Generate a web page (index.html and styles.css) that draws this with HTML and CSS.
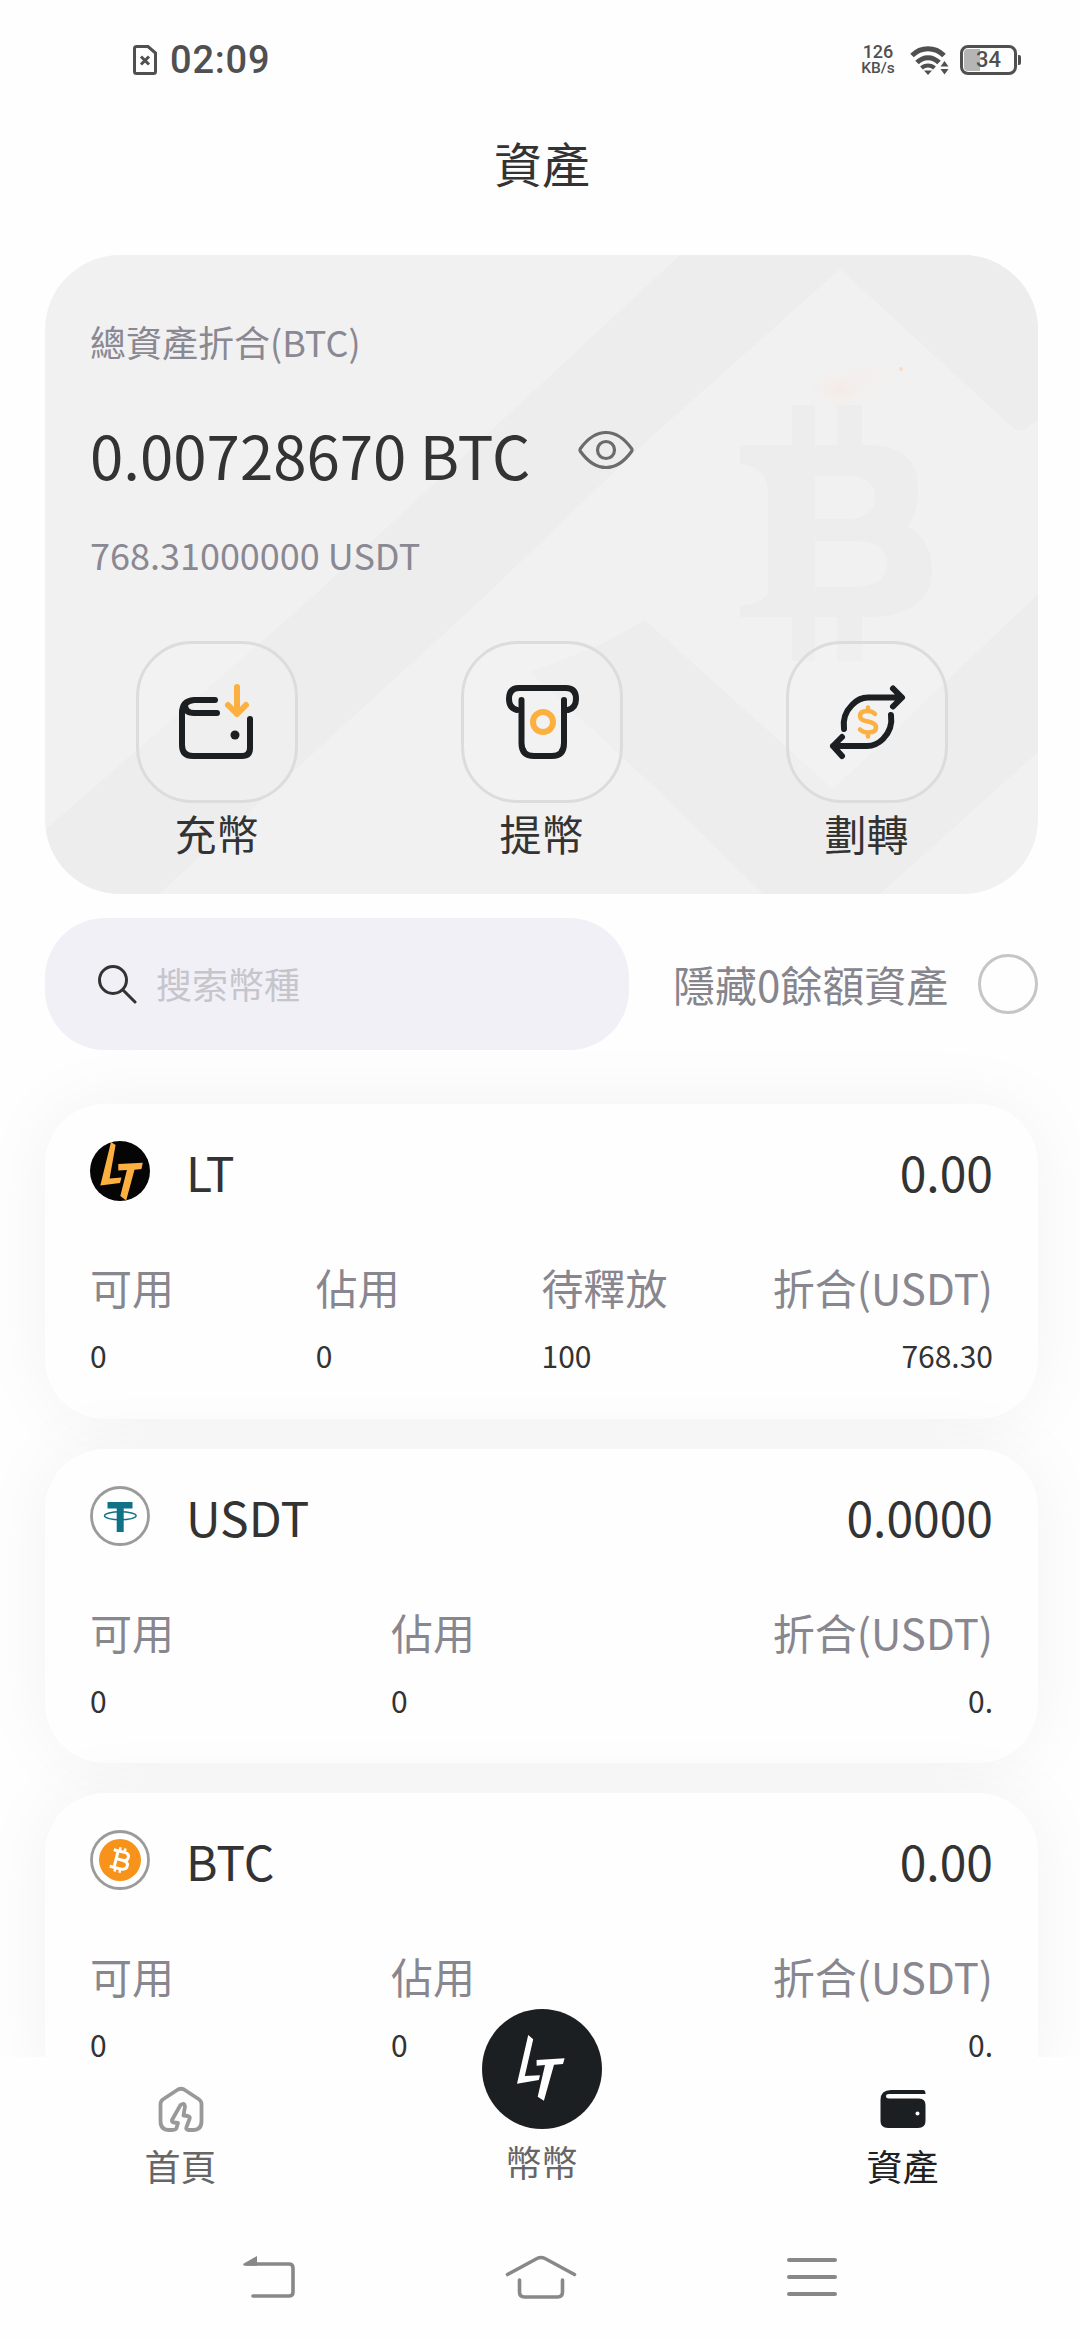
FILE: index.html
```html
<!DOCTYPE html>
<html lang="zh-Hant">
<head>
<meta charset="utf-8">
<title>資產</title>
<link rel="stylesheet" href="styles.css">
</head>
<body>
<div class="screen">
  <header class="status">
    <div class="status-left">
      <svg width="26" height="32" viewBox="0 0 26 32" fill="none" stroke="#505050"><path d="M4 2.5H16L23.5 9V27.5Q23.5 29.5 21.5 29.5H4.500Q2.500 29.500 2.500 27.500V4.500Q2.500 2.500 4.500 2.500Z" stroke-width="3"/><path d="M9 12.500L17 20.500M17 12.500L9 20.500" stroke-width="3"/></svg>
      <span class="clock">02:09</span>
    </div>
    <div class="status-right">
      <div class="speed"><span class="speed-num">126</span><span class="speed-unit">KB/s</span></div>
      <svg width="40" height="30" viewBox="0 0 40 30" fill="none" stroke="#505050" stroke-width="5"><path d="M2 10.500C11 1.500 25 1.500 34 10.500"/><path d="M7 17.500C13.500 11 22.500 11 29 17.500"/><path d="M11.500 23C15 19.500 21 19.500 24.500 23" stroke-width="4"/><path d="M14 25.500H22L18 30Z" fill="#505050" stroke="none"/><path d="M34.500 16L38.500 21.500H30.500ZM30.500 24H38.500L34.500 29.500Z" fill="#505050" stroke="none"/></svg>
      <div class="battery"><span class="battery-fill"></span><span class="battery-text">34</span></div>
    </div>
  </header>

  <h1 class="title">資產</h1>

  <section class="hero">
    <svg class="hero-art" width="993" height="639" viewBox="45 255 993 639">
      <defs><radialGradient id="glow"><stop offset="0" stop-color="#fbe3d8" stop-opacity=".5"/><stop offset="1" stop-color="#f6ece6" stop-opacity="0"/></radialGradient></defs>
      <g fill="#ededed">
        <path d="M680 255H1038V420L1024 430Q1018 432 1012 427L840 269L640 447L481 600L159 894H45V830L309 600Z"/>
        <path d="M645 620L833 789L1038 594V752L880 894H763L660 792L530 672L600 645Z"/>
        <path fill-rule="evenodd" d="M740 445H792V405H815V445H837V405H862V445H875Q918 449 918 488Q918 515 907 526Q932 540 932 570Q932 613 875 617H862V661H837V617H815V661H792V617H740V606Q768 602 768 590V490Q766 466 740 464ZM815 476V519H850Q875 517 875 498Q875 477 850 476ZM815 541V587H855Q887 586 887 564Q887 541 855 541Z"/>
      </g>
      <ellipse cx="840" cy="390" rx="34" ry="20" fill="url(#glow)"/>
      <ellipse cx="865" cy="376" rx="46" ry="20" fill="url(#glow)" opacity=".4"/>
      <circle cx="901" cy="369" r="2" fill="#f7ddc9"/>
    </svg>
    <div class="hero-body">
      <p class="hero-label">總資產折合(BTC)</p>
      <div class="balance-row">
        <span class="balance">0.00728670 BTC</span>
        <svg width="56" height="40" viewBox="0 0 56 40" fill="none" stroke="#6b6b6b" stroke-width="3.200"><path d="M2.500 18.500Q14 2.500 28 2.500T53.500 18.500Q54.500 20 53.500 21.500Q42 37.500 28 37.500T2.500 21.500Q1.500 20 2.500 18.500Z"/><circle cx="28" cy="20" r="8.500"/></svg>
      </div>
      <p class="hero-sub">768.31000000 USDT</p>
      <div class="actions">
        <div class="action">
          <div class="action-box"><svg width="80" height="80" viewBox="0 0 80 80" fill="none" stroke="#1c1f22" stroke-width="6" stroke-linecap="round" stroke-linejoin="round"><path d="M38 18H17Q5 19 5 31V63Q5 74 16 74H65Q73 74 73 66V37"/><path d="M40 31H17Q8 31 8 23"/><circle cx="58" cy="53" r="4.500" fill="#1c1f22" stroke="none"/><path d="M60 5V32M51 23L60 32L69 23" stroke="#fbb040"/></svg></div>
          <span>充幣</span>
        </div>
        <div class="action">
          <div class="action-box"><svg width="80" height="80" viewBox="0 0 80 80" fill="none" stroke="#1c1f22" stroke-width="6" stroke-linecap="round" stroke-linejoin="round"><path d="M15 28Q7 26 7 17Q7 6 17 6H64Q74 6 74 17Q74 26 66 28"/><path d="M19.500 18V61Q19.500 74 32 74H50Q62 74 62 61V18"/><circle cx="41" cy="40" r="10" stroke="#fbb040"/></svg></div>
          <span>提幣</span>
        </div>
        <div class="action">
          <div class="action-box"><svg width="80" height="80" viewBox="0 0 80 80" fill="none" stroke="#1c1f22" stroke-width="6" stroke-linecap="round" stroke-linejoin="round"><path d="M17 47Q15 33 25 23Q32 15.500 41 15.500H74M66 6.500L75 15.500L66 24.500"/><path d="M64 33Q66 47 56 57Q49 64 40 64H6M15 55L6 64L15 74"/><g stroke="#fbb040" stroke-width="4.500"><path d="M48 32Q45 29 40.500 29Q33 29 33 34Q33 38.500 41 39.500Q49 41 49 45.500Q49 50.500 41 50.500Q36 50.500 33 47.500M41 25.500V29M41 50.500V54.500"/></g></svg></div>
          <span>劃轉</span>
        </div>
      </div>
    </div>
  </section>

  <div class="filter">
    <div class="search">
      <svg width="40" height="40" viewBox="0 0 40 40" fill="none" stroke="#333" stroke-width="3"><circle cx="16" cy="16" r="13.500"/><path d="M26 26L38 38" stroke-linecap="round"/></svg>
      <span>搜索幣種</span>
    </div>
    <span class="hide-zero">隱藏0餘額資產</span>
    <span class="radio"></span>
  </div>

  <main class="assets">
    <article class="card">
      <div class="card-head">
        <svg width="60" height="60" viewBox="0 0 60 60"><circle cx="30" cy="30" r="30" fill="#050505"/><path fill="#fbb040" d="M21 1L25.600 4L19.600 37.500L31.500 36.500L30 42L10.300 44.500ZM28.300 23L52.800 21.700L51.500 28L44.500 28.700L36.200 59.500L30.300 55L36.900 29L28.300 29.500Z"/></svg>
        <span class="coin">LT</span><span class="total">0.00</span>
      </div>
      <div class="cols four">
        <div><p class="key">可用</p><p class="val">0</p></div>
        <div><p class="key">佔用</p><p class="val">0</p></div>
        <div><p class="key">待釋放</p><p class="val">100</p></div>
        <div class="end"><p class="key">折合(USDT)</p><p class="val">768.30</p></div>
      </div>
    </article>
    <article class="card">
      <div class="card-head">
        <svg width="60" height="60" viewBox="0 0 60 60"><circle cx="30" cy="30" r="28.500" fill="#fff" stroke="#9b9b9b" stroke-width="2.800"/><path fill="#0f7286" d="M17.500 16H42.500V22.500H33.700V46H26.700V22.500H17.500Z"/><ellipse cx="30.300" cy="29.800" rx="15.800" ry="4" fill="none" stroke="#0f7286" stroke-width="1.500"/></svg>
        <span class="coin">USDT</span><span class="total">0.0000</span>
      </div>
      <div class="cols">
        <div><p class="key">可用</p><p class="val">0</p></div>
        <div><p class="key">佔用</p><p class="val">0</p></div>
        <div class="end"><p class="key">折合(USDT)</p><p class="val">0.</p></div>
      </div>
    </article>
    <article class="card">
      <div class="card-head">
        <svg width="60" height="60" viewBox="0 0 60 60"><circle cx="30" cy="30" r="28.500" fill="#fff" stroke="#9b9b9b" stroke-width="2.800"/><circle cx="30" cy="30" r="21" fill="#f7931a"/><g transform="rotate(14 30 30)" fill="none" stroke="#fff" stroke-width="3"><path d="M21.500 21.500H32.500Q37.500 21.500 37.500 25.500T32.500 29.600H26M32.500 29.600Q38.500 29.600 38.500 34T32.500 38.500H21.500M26 21.500V38.500"/><path d="M27.500 17.500V21.500M32.500 17.500V21.500M27.500 38.500V42.500M32.500 38.500V42.500" stroke-width="2.600"/></g></svg>
        <span class="coin">BTC</span><span class="total">0.00</span>
      </div>
      <div class="cols">
        <div><p class="key">可用</p><p class="val">0</p></div>
        <div><p class="key">佔用</p><p class="val">0</p></div>
        <div class="end"><p class="key">折合(USDT)</p><p class="val">0.</p></div>
      </div>
    </article>
  </main>

  <footer class="bottom">
    <nav class="tabs">
      <div class="tab">
        <svg width="48" height="48" viewBox="0 0 48 48" fill="none" stroke="#999" stroke-width="3.800" stroke-linejoin="round" stroke-linecap="round"><path d="M14 45H12Q3.500 45 3.500 36V19Q3.500 16 6.500 14L21 4.500Q24 3 27 4.500L41.500 14Q44.500 16 44.500 19V36Q44.500 45 36 45H31Q28.500 44.500 29.500 42L32.500 34Q33.500 31.500 31 31L26.500 30.500L28 21.500Q27.500 17 23.500 20L15 35Q14.500 37.500 17 37.500L21 38L19.500 43Q19 45 14 45Z"/></svg>
        <span>首頁</span>
      </div>
      <div class="tab tab-main">
        <svg class="fab" width="120" height="120" viewBox="0 0 120 120"><circle cx="60" cy="60" r="60" fill="#1c1f22"/><path fill="#fff" d="M46.200 26L51.200 30.300L42.800 67L58 66.300L56.800 71L35 74.700ZM54.600 51L82.600 49.300L81 55L72 55.700L61.900 91.700L55.700 87.700L63 56L54.600 56.700Z"/></svg>
        <span>幣幣</span>
      </div>
      <div class="tab active">
        <svg width="48" height="48" viewBox="0 0 48 48"><path fill="#1c1f22" d="M12 5H44Q46.500 5 46.500 9H10Q7 9 7 11Q7 13.500 10 13.500H40Q46.500 13.500 46.500 20V36Q46.500 43 39 43H9Q1.500 43 1.500 36V15Q1.500 5 12 5Z"/><circle cx="38.500" cy="28.500" r="2" fill="#fff"/></svg>
        <span>資產</span>
      </div>
    </nav>
    <div class="system">
      <svg width="52" height="44" viewBox="0 0 52 44" fill="none" stroke="#888" stroke-width="3.600" stroke-linecap="round"><path d="M4 9H46Q50 9 50 13V37Q50 41 46 41H10"/><path d="M0 9L14 1V10.800H1Z" fill="#888" stroke="none"/></svg>
      <svg width="72" height="44" viewBox="0 0 72 44" fill="none" stroke="#888" stroke-width="3.600" stroke-linecap="round"><path d="M2.500 19.500L32 3.500Q36 1.500 40 3.500L69.500 19.500M14.500 25V37Q14.500 42 19.500 42H52.500Q57.500 42 57.500 37V25"/></svg>
      <svg width="52" height="44" viewBox="0 0 52 44" fill="none" stroke="#888" stroke-width="4" stroke-linecap="round"><path d="M3 5H49M3 22H49M3 39H49"/></svg>
    </div>
  </footer>
</div>
</body>
</html>
```
FILE: styles.css
```css
* { box-sizing: border-box; }
body { margin: 0; background: #fefefe; color: #333; font-family: "Noto Sans CJK TC", "Noto Sans CJK SC", sans-serif; }
p, h1 { margin: 0; font-weight: 400; }
svg { display: block; flex: none; }
.screen { width: 1080px; height: 2340px; overflow: hidden; display: flex; flex-direction: column; position: relative; }

.status { flex: none; height: 120px; padding: 0 59px 0 132px; display: flex; justify-content: space-between; align-items: center; color: #505050; font-family: Roboto, sans-serif; }
.status-left, .status-right { display: flex; align-items: center; }
.status-left { gap: 12px; }
.clock { font-size: 38px; font-weight: 500; letter-spacing: .8px; }
.speed { display: flex; flex-direction: column; align-items: center; width: 36px; margin-right: 14px; }
.speed-num { font-size: 18px; line-height: 17px; font-weight: 500; }
.speed-unit { font-size: 15.500px; line-height: 17px; font-weight: 500; }
.battery { position: relative; width: 57px; height: 30px; margin: 0 4px 0 10px; border: 3px solid #505050; border-radius: 8px; display: flex; align-items: center; justify-content: center; }
.battery::after { content: ""; position: absolute; right: -7px; top: 7px; width: 3px; height: 10px; background: #505050; border-radius: 0 2px 2px 0; }
.battery-fill { position: absolute; left: 1px; top: 1px; bottom: 1px; width: 16px; background: #b5b5b5; border-radius: 4px 0 0 4px; }
.battery-text { position: relative; font-size: 22px; line-height: 24px; font-weight: 500; }

.title { flex: none; height: 90px; line-height: 90px; margin: -3px 0 48px; padding-left: 4px; text-align: center; font-size: 48px; }

.hero { position: relative; flex: none; width: 993px; height: 639px; margin-left: 45px; border-radius: 75px; background: #f1f1f1; overflow: hidden; }
.hero-art { position: absolute; inset: 0; }
.hero-body { position: relative; height: 100%; display: flex; flex-direction: column; }
.hero-label, .hero-sub { padding-left: 45px; font-size: 36px; line-height: 54px; color: #8a8892; }
.hero-label { margin-top: 59px; }
.balance-row { display: flex; align-items: center; padding-left: 45px; height: 90px; margin-top: 41px; gap: 48px; }
.balance { font-size: 60px; line-height: 90px; }
.balance-row svg { margin-top: -8px; }
.hero-sub { margin-top: 28px; }
.actions { display: grid; grid-template-columns: repeat(3, 325px); margin: 60px 0 0 9px; }
.action { display: flex; flex-direction: column; align-items: center; font-size: 42px; line-height: 60px; }
.action-box { width: 162px; height: 162px; border: 3px solid #dcdcdc; border-radius: 56px; background: rgba(255,255,255,.12); display: flex; align-items: center; justify-content: center; }

.filter { flex: none; display: flex; align-items: center; height: 132px; margin: 24px 42px 54px 45px; color: #86858d; }
.search { width: 584px; height: 132px; padding: 0 52px; border-radius: 60px; background: #f1f0f6; display: flex; align-items: center; gap: 19px; font-size: 36px; color: #c6c5cc; }
.search span { margin-top: -2px; }
.hide-zero { margin: -2px 0 0 44px; font-size: 42px; }
.radio { width: 60px; height: 60px; margin-left: auto; border: 3px solid #c6c6c6; border-radius: 50%; }

.assets { flex: none; display: flex; flex-direction: column; gap: 30px; margin-left: 45px; width: 993px; }
.card { height: 314.500px; padding: 37px 45px 0; border-radius: 60px; background: #fefefe; box-shadow: 0 0 75px rgba(0,0,0,.05); }
.card-head { display: flex; align-items: center; height: 60px; font-size: 48px; line-height: 60px; }
.coin { margin-left: 36px; }
.total { margin-left: auto; }
.cols { display: grid; grid-template-columns: repeat(3, 1fr); margin-top: 54px; }
.cols.four { grid-template-columns: repeat(4, 1fr); }
.key { font-size: 42px; line-height: 64px; color: #88868e; white-space: nowrap; }
.val { font-size: 30px; line-height: 45px; margin-top: 14px; }
.end { display: flex; flex-direction: column; align-items: flex-end; }

.bottom { position: absolute; left: 0; right: 0; top: 2057px; bottom: 0; background: #fefefe; }
.tabs { display: grid; grid-template-columns: repeat(3, 361px); height: 163px; }
.tab { display: flex; flex-direction: column; align-items: center; padding-top: 28px; font-size: 36px; color: #666; }
.tab span { line-height: 54px; margin-top: 5px; }
.tab.active { color: #202020; }
.tab-main { padding-top: 0; }
.fab { margin-top: -48px; }
.tab-main span { margin-top: 5px; }
.system { display: flex; justify-content: space-between; padding: 35px 242px 0 243px; }
```
